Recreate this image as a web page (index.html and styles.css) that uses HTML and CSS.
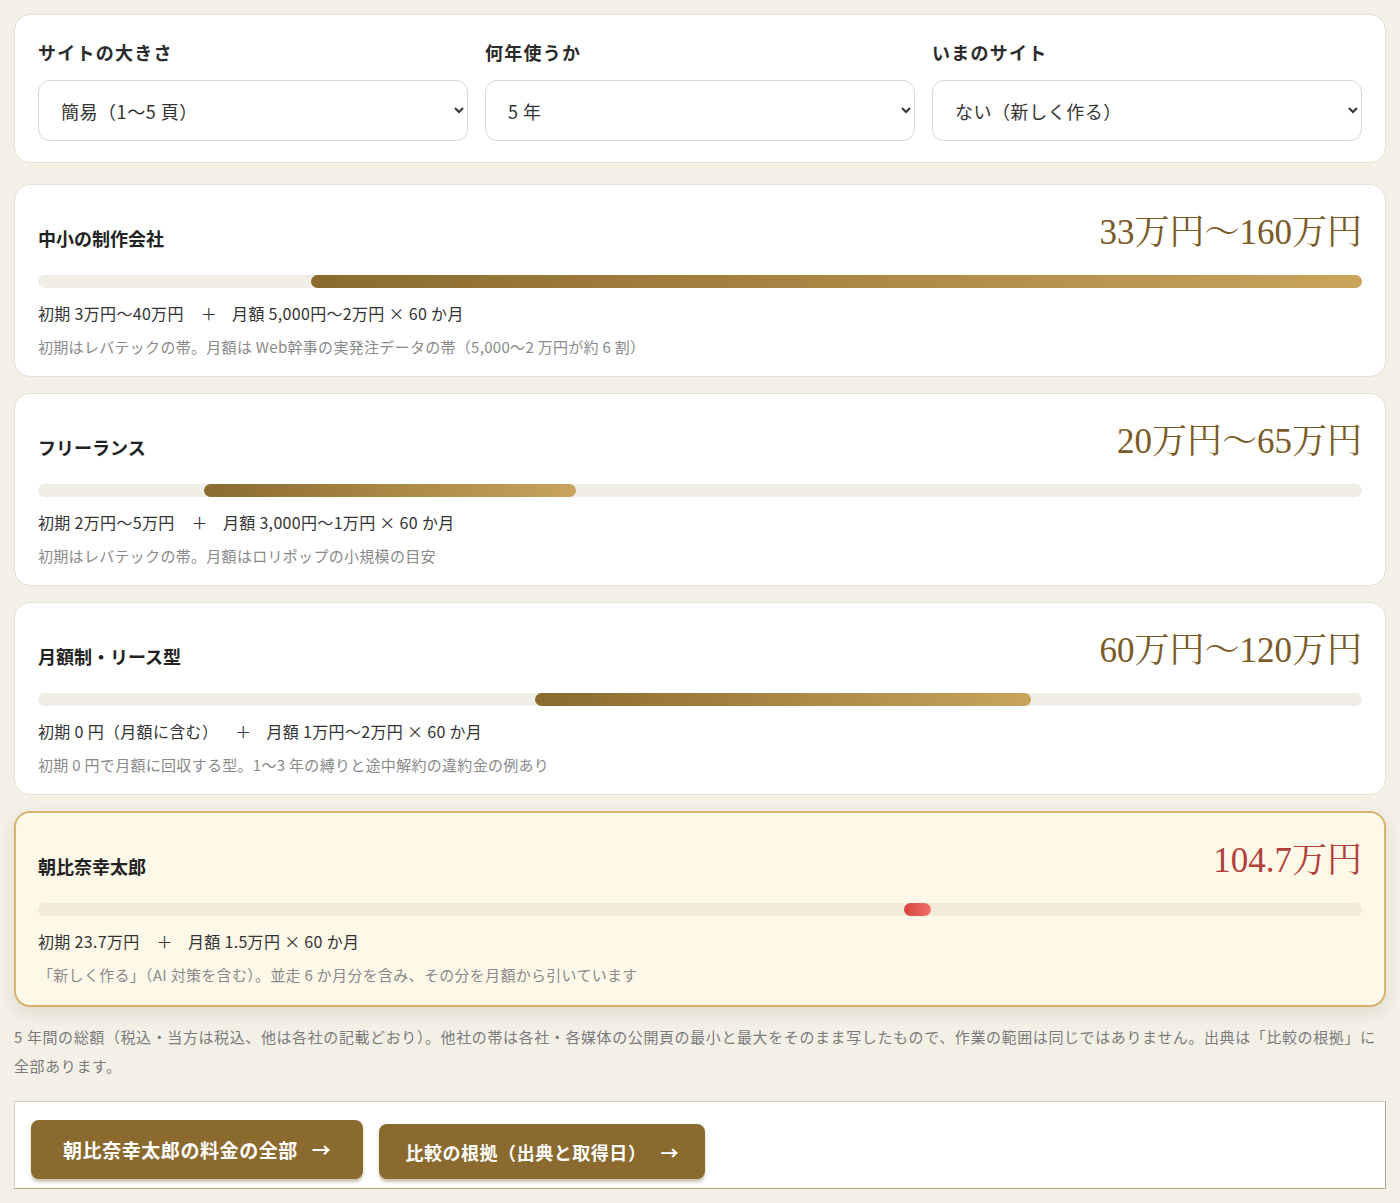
FILE: index.html
```html
<!DOCTYPE html>
<html lang="ja">
<head>
  <meta charset="UTF-8" />
  <meta name="viewport" content="width=device-width, initial-scale=1.0" />
  <title>5年間の総額くらべ</title>
  <link rel="stylesheet" href="styles.css">
</head>
<body>
  <!-- Conditions -->
  <div class="panel form-panel">
    <label class="field">
      <span class="field-label">サイトの大きさ</span>
      <select class="field-select">
        <option>簡易（1〜5 頁）</option>
        <option>標準（6〜15 頁）</option>
        <option>大きめ（16 頁〜）</option>
      </select>
    </label>
    <label class="field">
      <span class="field-label">何年使うか</span>
      <select class="field-select">
        <option>3 年</option>
        <option selected>5 年</option>
        <option>7 年</option>
      </select>
    </label>
    <label class="field">
      <span class="field-label">いまのサイト</span>
      <select class="field-select">
        <option>ない（新しく作る）</option>
        <option>ある（作り直す）</option>
      </select>
    </label>
  </div>

  <!-- Comparison rows -->
  <div class="rows">
    <div class="panel row">
      <div class="row-head">
        <h3 class="row-name">中小の制作会社</h3>
        <div class="row-price">33万円〜160万円</div>
      </div>
      <div class="bar"><span class="fill" style="left:20.6%;width:79.4%"></span></div>
      <p class="row-detail">初期 3万円〜40万円<span class="plus">＋</span>月額 5,000円〜2万円 × 60 か月</p>
      <p class="row-note">初期はレバテックの帯。月額は Web幹事の実発注データの帯（5,000〜2 万円が約 6 割）</p>
    </div>

    <div class="panel row">
      <div class="row-head">
        <h3 class="row-name">フリーランス</h3>
        <div class="row-price">20万円〜65万円</div>
      </div>
      <div class="bar"><span class="fill" style="left:12.5%;width:28.1%"></span></div>
      <p class="row-detail">初期 2万円〜5万円<span class="plus">＋</span>月額 3,000円〜1万円 × 60 か月</p>
      <p class="row-note">初期はレバテックの帯。月額はロリポップの小規模の目安</p>
    </div>

    <div class="panel row">
      <div class="row-head">
        <h3 class="row-name">月額制・リース型</h3>
        <div class="row-price">60万円〜120万円</div>
      </div>
      <div class="bar"><span class="fill" style="left:37.5%;width:37.5%"></span></div>
      <p class="row-detail">初期 0 円（月額に含む）<span class="plus">＋</span>月額 1万円〜2万円 × 60 か月</p>
      <p class="row-note">初期 0 円で月額に回収する型。1〜3 年の縛りと途中解約の違約金の例あり</p>
    </div>

    <div class="panel row row-ours">
      <div class="row-head">
        <h3 class="row-name">朝比奈幸太郎</h3>
        <div class="row-price">104.7万円</div>
      </div>
      <div class="bar"><span class="fill dot" style="left:65.4%"></span></div>
      <p class="row-detail">初期 23.7万円<span class="plus">＋</span>月額 1.5万円 × 60 か月</p>
      <p class="row-note">「新しく作る」（AI 対策を含む）。並走 6 か月分を含み、その分を月額から引いています</p>
    </div>
  </div>

  <p class="footnote">5 年間の総額（税込・当方は税込、他は各社の記載どおり）。他社の帯は各社・各媒体の公開頁の最小と最大をそのまま写したもので、作業の範囲は同じではありません。出典は「比較の根拠」に全部あります。</p>

  <div class="links">
    <a class="btn btn-main" href="#">朝比奈幸太郎の料金の全部<span class="arrow">→</span></a>
    <a class="btn" href="#">比較の根拠（出典と取得日）<span class="arrow">→</span></a>
  </div>
</body>
</html>
```

FILE: styles.css
```css
/* Base */
html, body {
  margin: 0; padding: 0;
  background: #f3f0e8;
}
body {
  padding: 14px 14px 0;
  font-family: "Noto Sans CJK JP", "Noto Sans", sans-serif;
  color: #2b2b2b;
}
/* Shared white panel */
.panel {
  background: #fff;
  border: 1px solid #e6e1d6;
  border-radius: 16px;
}
/* Condition selects */
.form-panel {
  display: grid;
  grid-template-columns: repeat(3, 1fr);
  gap: 17px;
  padding: 23px 23px 21px;
  margin-bottom: 21px;
}
.field { display: flex; flex-direction: column; }
.field-label {
  font-size: 18px; font-weight: 700;
  line-height: 28px;
  letter-spacing: 0.07em;
  color: #2b2b2b;
  margin-bottom: 14px;
}
.field-select {
  height: 61px;
  padding: 0 10px 0 18px;
  font-family: inherit;
  font-size: 18px;
  letter-spacing: 0.03em;
  color: #333;
  background: #fff;
  border: 1px solid #dcd8d0;
  border-radius: 12px;
}
/* Comparison rows */
.rows {
  display: flex; flex-direction: column;
  gap: 16px;
}
.row { padding: 25px 23px 18px; }
.row-head {
  display: flex;
  justify-content: space-between;
  align-items: baseline;
  margin-bottom: 19px;
}
.row-name {
  position: relative; top: 2px;
  margin: 0;
  font-size: 18px; font-weight: 700;
  color: #222;
}
.row-price {
  font-family: "Liberation Serif", "Noto Serif CJK JP", "Noto Sans CJK JP", serif;
  font-size: 35px;
  line-height: 46px;
  color: #7a5a26;
}
.bar {
  position: relative;
  height: 13px;
  border-radius: 7px;
  background: #f1eee8;
  margin-bottom: 13px;
}
.fill {
  position: absolute; top: 0; bottom: 0;
  border-radius: 7px;
  background: linear-gradient(90deg, #8a6a2e, #c8a45c);
}
.fill.dot {
  width: 27px;
  background: linear-gradient(90deg, #d8433d, #f0726a);
}
.row-detail {
  margin: 0 0 10px;
  font-size: 16px;
  line-height: 25px;
  letter-spacing: 0.02em;
  color: #333;
}
.plus { margin: 0 15px 0 17px; }
.row-note {
  margin: 0;
  font-size: 15px;
  line-height: 22px;
  letter-spacing: 0.02em;
  color: #8a8a8a;
}
/* Highlighted row */
.row-ours {
  background: #fef8e8;
  border: 2px solid #d6b46e;
  padding: 25px 22px 19px;
  box-shadow: 0 6px 16px rgba(120, 90, 40, 0.14);
}
.row-ours .row-price { color: #b23f3a; }
.row-ours .bar { background: #f3ead8; }
/* Footnote */
.footnote {
  margin: 15px 0 21px;
  font-size: 15px;
  line-height: 29px;
  letter-spacing: 0.04em;
  color: #7b7b7b;
}
/* Link buttons */
.links {
  display: flex;
  align-items: flex-end;
  gap: 16px;
  padding: 18px 16px 9px;
  background: #fff;
  border: 1px solid #d8d0c0;
  border-right-color: #b3a484;
  border-bottom-color: #b3a484;
}
.btn {
  display: inline-flex; align-items: center;
  height: 55px;
  padding: 0 26px;
  background: #8b6a2f;
  color: #fff;
  font-size: 18px; font-weight: 700;
  letter-spacing: 0.03em;
  text-decoration: none;
  border-radius: 8px;
  box-shadow: 0 3px 3px rgba(110, 80, 30, 0.35);
}
.btn-main {
  height: 59px;
  padding: 0 32px;
  font-size: 19px;
}
.arrow { margin-left: 14px; }
```
